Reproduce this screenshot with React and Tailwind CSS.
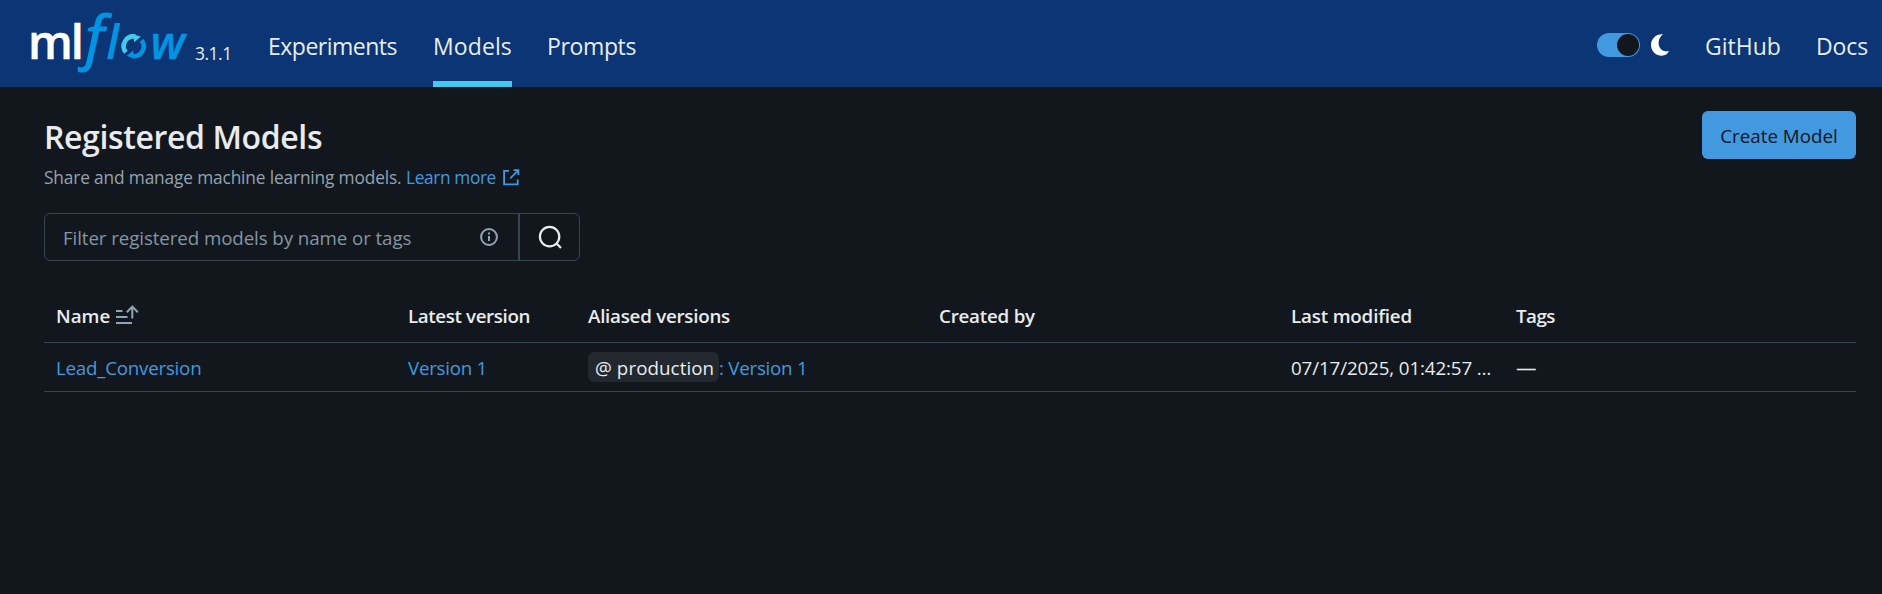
const navLink = "h-full shrink-0 border-b-[6px] pt-[11px] flex items-center justify-start whitespace-nowrap text-[23px] text-[#e8ecf0]";
const link = "text-[#4299e0]";

function Logo() {
  return (
    <svg className="block shrink-0 overflow-visible" width="162" height="87" viewBox="28 0 162 87" fontFamily="Open Sans, sans-serif">
      <g fill="#fff" fontSize="47">
        <text x="28" y="59" fontWeight="600" stroke="#fff" strokeWidth="0.5">m</text>
        <text x="70.7" y="59" fontWeight="600" stroke="#fff" strokeWidth="0.5">l</text>
      </g>
      <g fill="#0194e2" stroke="#0194e2" fontStyle="italic">
        <text transform="translate(85.2 57.6) scale(1.04 1)" x="0" y="0" fontSize="58" strokeWidth="1.1">f</text>
        <text x="106.3" y="59" fontSize="47" fontWeight="600" stroke="none">l</text>
        <text x="150.6" y="59" fontSize="46" fontWeight="600" strokeWidth="0.4">w</text>
      </g>
      <g fill="none" strokeWidth="4.6">
        <path d="M125.9 52.4A9.8 9.8 0 0 1 135.4 36.6" stroke="#43c9ed" />
        <path d="M141.5 40.2A9.8 9.8 0 0 1 132 56" stroke="#0194e2" />
      </g>
      <path d="M140.9 36.6L133.2 34.4L134.2 42.2Z" fill="#43c9ed" />
      <path d="M126.5 56L134.2 58.2L133.2 50.4Z" fill="#0194e2" />
    </svg>
  );
}

function Header() {
  return (
    <header className="flex h-[87px] items-stretch bg-[#0b3574] pl-7 pr-[14px]">
      <Logo />
      <span className="w-[42px] shrink-0 pl-[5px] pt-[41px] text-[17.5px] leading-6 tracking-[-0.5px] text-[#e8ecf0]">3.1.1</span>
      <nav className="ml-9 flex gap-9">
        <a className={`${navLink} w-[129px] border-transparent tracking-[-0.5px]`}>Experiments</a>
        <a className={`${navLink} w-[79px] border-[#43c9ed] tracking-[0.1px]`}>Models</a>
        <a className={`${navLink} -ml-px w-[89px] border-transparent tracking-[-0.37px]`}>Prompts</a>
      </nav>
      <div className="ml-auto flex items-center">
        <span className="mt-[3px] flex h-6 w-[43px] items-center justify-end rounded-full bg-[#4299e0] pr-[1.5px]">
          <span className="size-[21.5px] rounded-full bg-[#11171c]" />
        </span>
        <svg className="ml-[11px] mt-[3px]" width="18" height="22" viewBox="0 0 18 22" fill="#fff">
          <path d="M12 .2C5.2 -.4 0 4.6 0 10.9C0 16.9 4.8 21.7 10.8 21.7C14 21.7 16.8 20 18 17.1C12 18.4 7.6 14.5 7.6 9C7.6 5.2 9.4 2.2 12 .2Z" />
        </svg>
        <a className={`${navLink} ml-9 w-[75px] border-transparent`}>GitHub</a>
        <a className={`${navLink} ml-9 w-[52px] border-transparent tracking-[-0.1px]`}>Docs</a>
      </div>
    </header>
  );
}

function ExternalIcon() {
  return (
    <svg className="ml-[7px] -mt-px" width="17" height="17" viewBox="0 0 17 17" fill="none" stroke="#4299e0" strokeWidth="1.8">
      <path d="M6 1.9H1.1V15.4H14.7V10.5M7.2 9.3L15.2 1.3M10.6 1.1H15.4V5.9" />
    </svg>
  );
}

function SortIcon() {
  return (
    <svg className="ml-[6px] -mt-[3px]" width="23" height="20" viewBox="0 0 23 20" fill="none" stroke="#92a4b3" strokeWidth="2">
      <path d="M0 6H6.5M0 12H11.5M0 18H16M16.3 13.5V1.6M10.8 7.2L16.3 1.6L21.8 7.2" />
    </svg>
  );
}

const cols = "grid grid-cols-[352px_180px_351px_352px_225px_352px] border-b border-[#37444f] text-[18.75px] text-[#e8ecf0] *:flex *:items-center *:px-3 *:whitespace-nowrap";

export default function App() {
  return (
    <div className="min-h-[594px] w-full bg-[#11171c] font-['Open_Sans','Noto_Sans',sans-serif]">
      <Header />
      <main className="pl-11 pr-[26px] pt-6">
        <div className="flex items-start justify-between">
          <div>
            <h1 className="pt-[6px] text-[32px] font-semibold leading-10 tracking-[-0.38px] text-[#e8ecf0]">Registered Models</h1>
            <p className="mt-[9px] flex h-6 items-center whitespace-nowrap text-[17.3px] text-[#92a4b3]">
              <span className="w-[362px] tracking-[-0.14px]">Share and manage machine learning models.</span>
              <a className="flex items-center text-[#4299e0]">
                <span className="w-[90px] tracking-[-0.37px]">Learn more</span>
                <ExternalIcon />
              </a>
            </p>
          </div>
          <button className="h-12 w-[154px] rounded-[6px] bg-[#4299e0] pt-0.5 text-[18.75px] text-[#11171c]">Create Model</button>
        </div>

        <div className="mt-[23px] flex h-12 w-[536px] overflow-hidden rounded-[6px] border border-[#37444f]">
          <div className="flex grow items-center pl-[18px] pr-5 text-[18.75px] text-[#8396a5]">
            <span className="grow pt-0.5 tracking-[-0.1px]">Filter registered models by name or tags</span>
            <svg width="18" height="18" viewBox="0 0 18 18" fill="none" stroke="#92a4b3" strokeWidth="2">
              <circle cx="9" cy="9" r="7.9" />
              <path d="M9 8V13M9 4.6V6.6" />
            </svg>
          </div>
          <div className="flex w-[61px] items-center justify-center border-l-2 border-[#37444f]">
            <svg width="24" height="24" viewBox="0 0 24 24" fill="none" stroke="#e8ecf0" strokeWidth="2.2">
              <circle cx="11.6" cy="11.6" r="9.7" />
              <path d="M18.3 18.3L23 23" />
            </svg>
          </div>
        </div>

        <div className={`${cols} mt-[29px] h-[53px] pt-px font-semibold`}>
          <div>Name<SortIcon /></div>
          <div className="tracking-[-0.38px]">Latest version</div>
          <div className="tracking-[-0.25px]">Aliased versions</div>
          <div className="tracking-[-0.22px]">Created by</div>
          <div className="tracking-[-0.17px]">Last modified</div>
          <div className="tracking-[-0.5px]">Tags</div>
        </div>
        <div className={`${cols} h-[49px]`}>
          <div className={`${link} pt-0.5 tracking-[-0.24px]`}>Lead_Conversion</div>
          <div className={`${link} pt-0.5 tracking-[-0.27px]`}>Version 1</div>
          <div>
            <span className="flex h-[30px] w-[131px] items-center rounded-[6px] bg-[#22282e] pl-[7px] pt-0.5 tracking-[0.08px]">@ production</span>
            <span className={`${link} whitespace-pre pt-0.5 tracking-[-0.25px]`}>: Version 1</span>
          </div>
          <div />
          <div className="pt-0.5 tracking-[-0.12px]">07/17/2025, 01:42:57 …</div>
          <div className="text-[20.5px]">—</div>
        </div>
      </main>
    </div>
  );
}
